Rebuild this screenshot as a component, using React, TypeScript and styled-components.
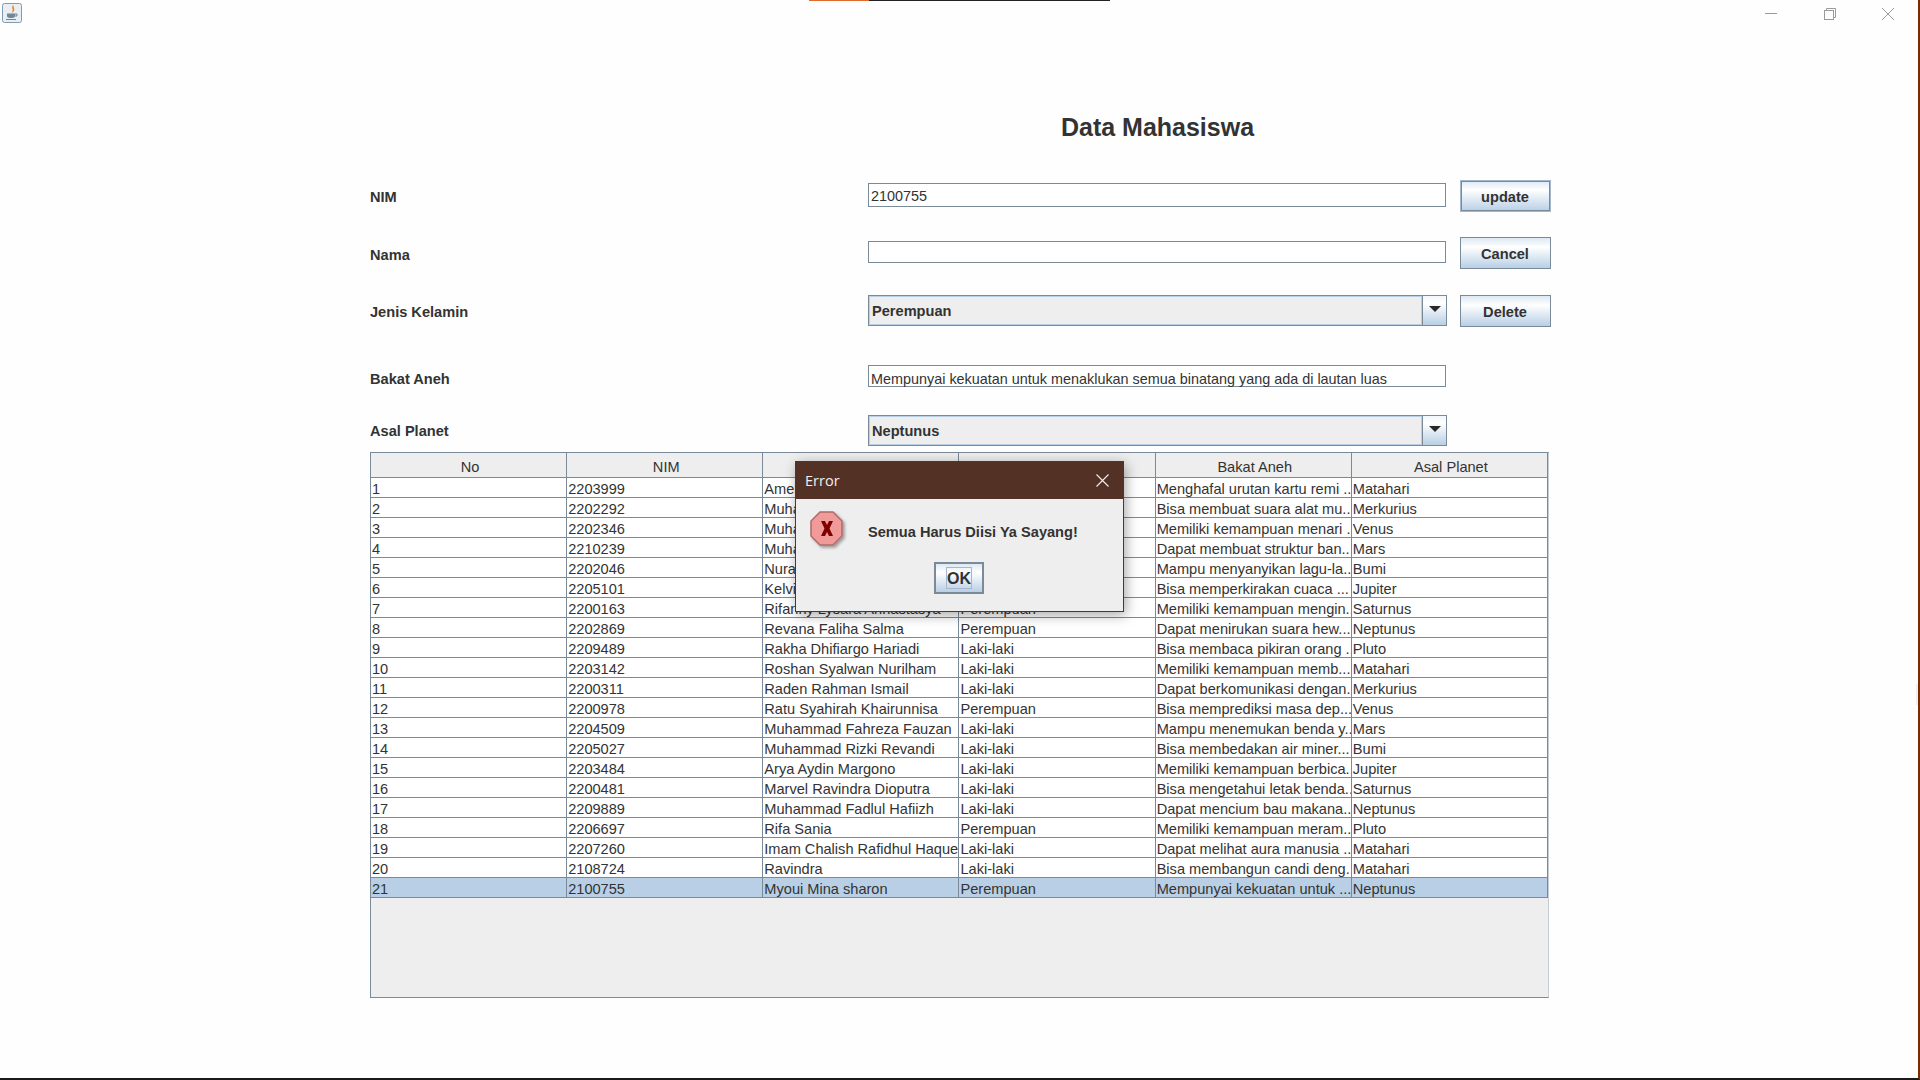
import React from "react";
import styled, { createGlobalStyle } from "styled-components";

const GlobalStyle = createGlobalStyle`
  * { margin:0; padding:0; box-sizing:border-box; }
  html, body, #root {
    width:100%;
    height:100%;
    font-family:"Liberation Sans", Arial, sans-serif;
    background:#fff;
    overflow:hidden;
  }
`;

const Shell = styled.div`
  position: relative;
  width: 1920px;
  height: 1080px;
  background: #fefefe;
  border-right: 2px solid #7a2b00;
  border-bottom: 2px solid #1a1a1a;
  color: #333333;
  overflow: hidden;
`;

const AccentStrip = styled.div`
  position: absolute;
  top: 0;
  left: 809px;
  width: 301px;
  height: 1px;
  background: linear-gradient(to right, #e06a2b 0 60px, #222 60px);
`;

const EdgeGap = styled.div`
  position: absolute;
  top: 684px;
  right: 0;
  width: 2px;
  height: 21px;
  background: #f0f0f0;
`;

const WindowBar = styled.div`
  height: 28px;
  padding: 3px 0 0 2px;
  display: flex;
  justify-content: space-between;
  align-items: flex-start;
`;

const WindowControls = styled.div`
  display: flex;
  gap: 46.5px;
  padding: 5px 24px 0 0;

  svg {
    display: block;
    width: 12px;
    height: 12px;
    stroke: #9a9a9a;
    fill: none;
  }
`;

const Form = styled.div`
  width: 1180px;
  margin-left: 370px;
`;

const TitleRow = styled.div`
  height: 152px;
  padding: 84px 0 0 498px;
`;

const Title = styled.h1`
  width: 579px;
  font-size: 25px;
  line-height: 30px;
  font-weight: bold;
  text-align: center;
`;

const Row = styled.div<{ $gap: number }>`
  display: grid;
  grid-template-columns: 498px 579px auto;
  align-items: start;
  min-height: 32px;
  margin-top: ${({ $gap }) => $gap}px;
`;

const Label = styled.label<{ $top: number }>`
  margin-top: ${({ $top }) => $top}px;
  font-size: 14.6px;
  line-height: 20px;
  font-weight: bold;
`;

const TextField = styled.div<{ $height: number; $top: number; $textDrop?: number }>`
  height: ${({ $height }) => $height}px;
  margin-top: ${({ $top }) => $top}px;
  width: 578px;
  padding-left: 2px;
  background: #fff;
  border: 1px solid #7a8a99;
  font-size: 14.4px;
  line-height: ${({ $height, $textDrop = 1 }) => $height + $textDrop}px;
  white-space: nowrap;
`;

const ComboBox = styled.div`
  display: flex;
  height: 31px;
  border: 1px solid #7a8a99;
`;

const ComboValue = styled.div`
  flex: 1;
  padding-left: 2px;
  background: #eeeeee;
  border: 1px solid #b8cfe5;
  font-size: 14.6px;
  line-height: 28px;
  font-weight: bold;
`;

const ComboArrow = styled.div`
  width: 24px;
  display: flex;
  align-items: center;
  justify-content: center;
  padding-bottom: 4px;
  border-left: 1px solid #7a8a99;
  background: linear-gradient(to bottom, #f2f6fa 0%, #ffffff 25%, #b8cfe5 100%);

  &::after {
    content: "";
    border-left: 6px solid transparent;
    border-right: 6px solid transparent;
    border-top: 6px solid #2a2a2a;
  }
`;

const Button = styled.button<{ $focused?: boolean }>`
  width: 91px;
  height: 32px;
  margin-left: 13px;
  padding: 2px 1px 0 0;
  font-family: inherit;
  font-size: 14.6px;
  font-weight: bold;
  color: #333333;
  border: 1px solid ${({ $focused }) => ($focused ? "#a3b8cc" : "#7a8a99")};
  box-shadow: ${({ $focused }) => ($focused ? "inset 0 0 0 1px #7a8a99" : "none")};
  background: linear-gradient(to bottom, #dde8f3 0%, #ffffff 30%, #b8cfe5 100%);
`;

const ScrollPane = styled.div`
  height: 546px;
  width: 1179px;
  margin-top: 5px;
  background: #eeeeee;
  border: 1px solid #7a8a99;
  border-right-color: #c5ced6;
`;

const Table = styled.table`
  width: 1177px;
  table-layout: fixed;
  border-collapse: separate;
  border-spacing: 0;
  font-size: 14.6px;
`;

const HeaderCell = styled.th`
  height: 25px;
  padding: 3px 0 0 3px;
  font-weight: normal;
  background: #eeeeee;
  text-align: center;
  border-right: 1px solid #7a8a99;
  border-bottom: 1px solid #7a8a99;
`;

const Cell = styled.td<{ $selected: boolean }>`
  height: 20px;
  padding: 3px 0 0 1px;
  background: ${({ $selected }) => ($selected ? "#b8cfe5" : "#ffffff")};
  border-right: 1px solid #7a8a99;
  border-bottom: 1px solid #7a8a99;
  white-space: nowrap;
  overflow: hidden;
  line-height: 16px;
`;

const Dialog = styled.div`
  position: absolute;
  left: 795px;
  top: 461px;
  width: 329px;
  height: 151px;
  background: #eeeeee;
  border: 1px solid #553427;
  box-shadow: 2px 3px 12px rgba(0, 0, 0, 0.35);
`;

const DialogBar = styled.div`
  height: 37px;
  padding: 0 14px 0 9px;
  display: flex;
  align-items: center;
  justify-content: space-between;
  background: #533225;
  color: #f4efec;
  font-family: "Open Sans", sans-serif;
  font-size: 14.5px;

  svg {
    display: block;
    width: 13px;
    height: 13px;
    stroke: #f4efec;
    stroke-width: 1.1;
  }
`;

const DialogMessage = styled.div`
  display: flex;
  align-items: flex-start;
  padding: 12px 0 0 14px;
`;

const MessageText = styled.p`
  margin: 11px 0 0 18px;
  font-size: 14.6px;
  line-height: 20px;
  font-weight: bold;
`;

const DialogActions = styled.div`
  display: flex;
  justify-content: center;
  padding: 9px 1px 0 0;
`;

const OkButton = styled.button`
  width: 50px;
  height: 32px;
  padding: 3px 10px;
  font-family: inherit;
  color: #333333;
  border: 2px solid #7a8a99;
  background: linear-gradient(to bottom, #dde8f3 0%, #ffffff 30%, #b8cfe5 100%);
`;

const OkFocus = styled.span`
  display: block;
  height: 100%;
  border: 1px solid #a3b8cc;
  font-size: 16px;
  line-height: 21px;
  font-weight: bold;
`;

const rows = [
  ["1", "2203999", "Amelia Zalfa Julianti", "Perempuan", "Menghafal urutan kartu remi ...", "Matahari"],
  ["2", "2202292", "Muhammad Iqbal Fadhilah", "Laki-laki", "Bisa membuat suara alat mu...", "Merkurius"],
  ["3", "2202346", "Muhammad Rifky Afandi", "Laki-laki", "Memiliki kemampuan menari ...", "Venus"],
  ["4", "2210239", "Muhammad Hanif Abdillah", "Laki-laki", "Dapat membuat struktur ban...", "Mars"],
  ["5", "2202046", "Nurainun", "Perempuan", "Mampu menyanyikan lagu-la...", "Bumi"],
  ["6", "2205101", "Kelvin Julian Putra", "Laki-laki", "Bisa memperkirakan cuaca ...", "Jupiter"],
  ["7", "2200163", "Rifanny Lysara Annastasya", "Perempuan", "Memiliki kemampuan mengin...", "Saturnus"],
  ["8", "2202869", "Revana Faliha Salma", "Perempuan", "Dapat menirukan suara hew...", "Neptunus"],
  ["9", "2209489", "Rakha Dhifiargo Hariadi", "Laki-laki", "Bisa membaca pikiran orang ...", "Pluto"],
  ["10", "2203142", "Roshan Syalwan Nurilham", "Laki-laki", "Memiliki kemampuan memb...", "Matahari"],
  ["11", "2200311", "Raden Rahman Ismail", "Laki-laki", "Dapat berkomunikasi dengan...", "Merkurius"],
  ["12", "2200978", "Ratu Syahirah Khairunnisa", "Perempuan", "Bisa memprediksi masa dep...", "Venus"],
  ["13", "2204509", "Muhammad Fahreza Fauzan", "Laki-laki", "Mampu menemukan benda y...", "Mars"],
  ["14", "2205027", "Muhammad Rizki Revandi", "Laki-laki", "Bisa membedakan air miner...", "Bumi"],
  ["15", "2203484", "Arya Aydin Margono", "Laki-laki", "Memiliki kemampuan berbica...", "Jupiter"],
  ["16", "2200481", "Marvel Ravindra Dioputra", "Laki-laki", "Bisa mengetahui letak benda...", "Saturnus"],
  ["17", "2209889", "Muhammad Fadlul Hafiizh", "Laki-laki", "Dapat mencium bau makana...", "Neptunus"],
  ["18", "2206697", "Rifa Sania", "Perempuan", "Memiliki kemampuan meram...", "Pluto"],
  ["19", "2207260", "Imam Chalish Rafidhul Haque", "Laki-laki", "Dapat melihat aura manusia ...", "Matahari"],
  ["20", "2108724", "Ravindra", "Laki-laki", "Bisa membangun candi deng...", "Matahari"],
  ["21", "2100755", "Myoui Mina sharon", "Perempuan", "Mempunyai kekuatan untuk ...", "Neptunus"],
];

const headers = ["No", "NIM", "Nama", "Jenis Kelamin", "Bakat Aneh", "Asal Planet"];

const JavaIcon = () => (
  <svg width="20" height="20" viewBox="0 0 20 20">
    <rect x="0.5" y="0.5" width="19" height="19" rx="2" fill="#e9eef3" stroke="#7f9ab2" />
    <path d="M11 2 C8.500 5 12.500 6 9.500 10 C14 8 12 5 11 2 Z" fill="#e8862c" />
    <path d="M5 10.500 H13 V13 C13 14.500 11.500 15 9 15 C6.500 15 5 14.500 5 13 Z" fill="#6f8799" />
    <path d="M13 11 H15 V13 H13" fill="none" stroke="#6f8799" />
    <path d="M4 16.500 H14" stroke="#6f8799" />
  </svg>
);

const ErrorIcon = () => (
  <svg width="40" height="42" viewBox="0 0 40 42">
    <defs>
      <filter id="errorShadow" x="-20%" y="-20%" width="150%" height="150%">
        <feDropShadow dx="2" dy="2" stdDeviation="1.5" floodColor="#000" floodOpacity="0.35" />
      </filter>
    </defs>
    <path
      d="M10 1 H23 L32 10 V25 L23 34 H10 L1 25 V10 Z"
      fill="#f09a9a"
      stroke="#b06a6a"
      strokeWidth="1.5"
      filter="url(#errorShadow)"
    />
    <path d="M11 10 H15 L17 14 L19 10 H23 L19.500 17.500 L23 25 H19 L17 21 L15 25 H11 L14.500 17.500 Z" fill="#800000" />
  </svg>
);

const App = () => {
  return (
    <>
      <GlobalStyle />
      <Shell>
        <AccentStrip />
        <EdgeGap />
        <WindowBar>
          <JavaIcon />
          <WindowControls>
            <svg viewBox="0 0 12 12">
              <path d="M0 5.500 H12" />
            </svg>
            <svg viewBox="0 0 12 12">
              <rect x="0.5" y="2.500" width="9" height="9" />
              <path d="M2.500 2.500 V0.500 H11.500 V9.500 H9.500" />
            </svg>
            <svg viewBox="0 0 12 12">
              <path d="M0 0 L12 12 M12 0 L0 12" />
            </svg>
          </WindowControls>
        </WindowBar>

        <Form>
          <TitleRow>
            <Title>Data Mahasiswa</Title>
          </TitleRow>

          <Row $gap={0}>
            <Label $top={7}>NIM</Label>
            <TextField $height={24} $top={3}>2100755</TextField>
            <Button $focused>update</Button>
          </Row>
          <Row $gap={25}>
            <Label $top={8}>Nama</Label>
            <TextField $height={22} $top={4} />
            <Button>Cancel</Button>
          </Row>
          <Row $gap={26}>
            <Label $top={7}>Jenis Kelamin</Label>
            <ComboBox>
              <ComboValue>Perempuan</ComboValue>
              <ComboArrow />
            </ComboBox>
            <Button>Delete</Button>
          </Row>
          <Row $gap={36}>
            <Label $top={6}>Bakat Aneh</Label>
            <TextField $height={22} $top={2} $textDrop={4}>
              Mempunyai kekuatan untuk menaklukan semua binatang yang ada di lautan luas
            </TextField>
          </Row>
          <Row $gap={20}>
            <Label $top={6}>Asal Planet</Label>
            <ComboBox>
              <ComboValue>Neptunus</ComboValue>
              <ComboArrow />
            </ComboBox>
          </Row>

          <ScrollPane>
            <Table>
              <thead>
                <tr>
                  {headers.map((h) => (
                    <HeaderCell key={h}>{h}</HeaderCell>
                  ))}
                </tr>
              </thead>
              <tbody>
                {rows.map((row) => (
                  <tr key={row[0]}>
                    {row.map((value, i) => (
                      <Cell key={i} $selected={row[0] === "21"}>
                        {value}
                      </Cell>
                    ))}
                  </tr>
                ))}
              </tbody>
            </Table>
          </ScrollPane>
        </Form>

        <Dialog>
          <DialogBar>
            Error
            <svg viewBox="0 0 13 13">
              <path d="M0.500 0.500 L12.500 12.500 M12.500 0.500 L0.500 12.500" />
            </svg>
          </DialogBar>
          <DialogMessage>
            <ErrorIcon />
            <MessageText>Semua Harus Diisi Ya Sayang!</MessageText>
          </DialogMessage>
          <DialogActions>
            <OkButton>
              <OkFocus>OK</OkFocus>
            </OkButton>
          </DialogActions>
        </Dialog>
      </Shell>
    </>
  );
};

export default App;
